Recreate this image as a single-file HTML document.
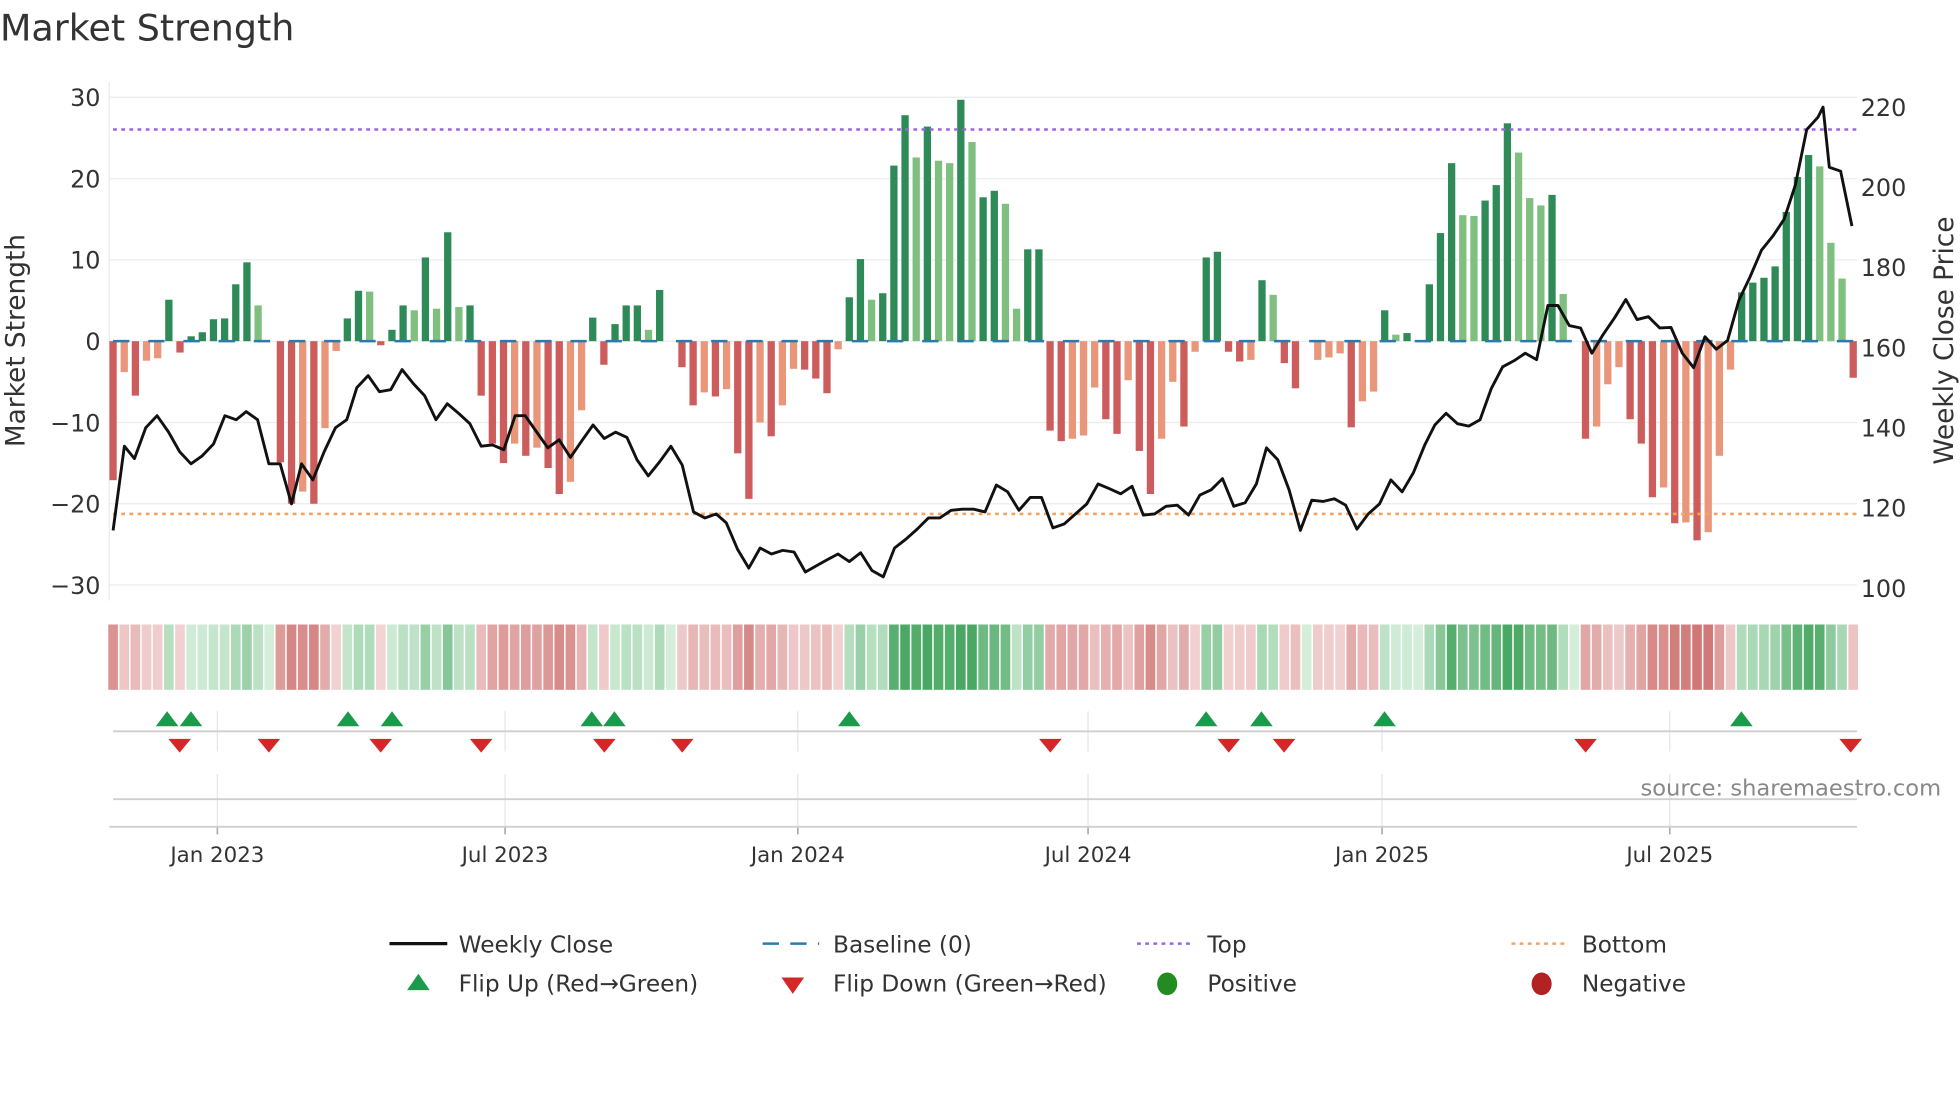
<!DOCTYPE html>
<html><head><meta charset="utf-8">
<style>
html,body{margin:0;padding:0;background:#fff;width:1960px;height:1102px;overflow:hidden}
svg{display:block}
text{font-family:"DejaVu Sans","Liberation Sans",sans-serif;fill:#333}
</style></head>
<body>
<svg id="c" width="1960" height="1102" viewBox="0 0 1560 877" xmlns="http://www.w3.org/2000/svg">
<text x="0" y="32" font-size="29">Market Strength</text>
<g id="grid"></g>
<g id="bars"></g>
<g id="lines"></g>
<g id="heat"></g>
<g id="marks"></g>
<text x="13" y="271" font-size="21" transform="rotate(-90 13 271)" text-anchor="middle" dominant-baseline="central">Market Strength</text>
<text x="1548" y="271" font-size="21" transform="rotate(-90 1548 271)" text-anchor="middle" dominant-baseline="central">Weekly Close Price</text>
<text x="1545" y="633" font-size="18" text-anchor="end" style="fill:#888">source: sharemaestro.com</text>
<g font-size="18.5">
<line x1="310" y1="751" x2="356" y2="751" stroke="#111" stroke-width="2.5"/>
<text x="365" y="758">Weekly Close</text>
<line x1="607" y1="751" x2="652" y2="751" stroke="#2a7ab0" stroke-width="2" stroke-dasharray="13 9"/>
<text x="663" y="758">Baseline (0)</text>
<line x1="905" y1="751" x2="948" y2="751" stroke="#9966dd" stroke-width="2" stroke-dasharray="3 3.5"/>
<text x="961" y="758">Top</text>
<line x1="1203" y1="751" x2="1247" y2="751" stroke="#f4a460" stroke-width="2" stroke-dasharray="3 3.5"/>
<text x="1259" y="758">Bottom</text>
<path d="M324 788 L342 788 L333 775 Z" fill="#1a9a4a"/>
<text x="365" y="789">Flip Up (Red→Green)</text>
<path d="M622 778 L640 778 L631 791 Z" fill="#d62728"/>
<text x="663" y="789">Flip Down (Green→Red)</text>
<ellipse cx="929" cy="783" rx="8" ry="9" fill="#228b22"/>
<text x="961" y="789">Positive</text>
<ellipse cx="1227" cy="783" rx="8" ry="9" fill="#b22222"/>
<text x="1259" y="789">Negative</text>
</g>
</svg>
<script>
var NS="http://www.w3.org/2000/svg";
function el(p,t,a){var e=document.createElementNS(NS,t);for(var k in a)e.setAttribute(k,a[k]);document.getElementById(p).appendChild(e);return e;}
function tx(p,x,y,s,a,sz){var e=el(p,'text',{x:x,y:y,'text-anchor':a,'font-size':sz||18});e.textContent=s;}
var V=[[-17.1,'d'],[-3.8,'l'],[-6.7,'d'],[-2.4,'l'],[-2.1,'l'],[5.1,'d'],[-1.4,'d'],[0.6,'d'],[1.1,'d'],[2.7,'d'],[2.8,'d'],[7,'d'],[9.7,'d'],[4.4,'l'],[0,'d'],
[-14.9,'d'],[-20,'d'],[-18.5,'l'],[-20,'d'],[-10.7,'l'],[-1.2,'l'],[2.8,'d'],[6.2,'d'],[6.1,'l'],[-0.5,'d'],[1.4,'d'],[4.4,'d'],[3.8,'l'],[10.3,'d'],[4,'l'],[13.4,'d'],[4.2,'l'],[4.4,'d'],
[-6.7,'d'],[-12.6,'d'],[-15,'d'],[-12.6,'l'],[-14.1,'d'],[-13.1,'l'],[-15.6,'d'],[-18.8,'d'],[-17.3,'l'],[-8.5,'l'],[2.9,'d'],[-2.9,'d'],[2.1,'d'],[4.4,'d'],[4.4,'d'],[1.4,'l'],[6.3,'d'],[0,'d'],
[-3.2,'d'],[-7.9,'d'],[-6.3,'l'],[-6.8,'d'],[-5.9,'l'],[-13.8,'d'],[-19.4,'d'],[-10,'l'],[-11.7,'d'],[-7.9,'l'],[-3.4,'l'],[-3.5,'d'],[-4.6,'d'],[-6.4,'d'],[-1,'l'],
[5.4,'d'],[10.1,'d'],[5.1,'l'],[5.9,'d'],[21.6,'d'],[27.8,'d'],[22.6,'l'],[26.4,'d'],[22.2,'l'],[21.9,'l'],[29.7,'d'],[24.5,'l'],[17.7,'d'],[18.5,'d'],[16.9,'l'],[4,'l'],[11.3,'d'],[11.3,'d'],
[-11,'d'],[-12.3,'d'],[-12,'l'],[-11.6,'l'],[-5.7,'l'],[-9.6,'d'],[-11.4,'d'],[-4.8,'l'],[-13.5,'d'],[-18.8,'d'],[-12,'l'],[-5,'l'],[-10.5,'d'],[-1.3,'l'],[10.3,'d'],[11,'d'],[-1.3,'d'],[-2.5,'d'],[-2.3,'l'],[7.5,'d'],[5.7,'l'],[-2.7,'d'],[-5.8,'d'],[0,'d'],[-2.3,'l'],[-2,'l'],[-1.5,'l'],[-10.6,'d'],[-7.4,'l'],[-6.2,'l'],
[3.8,'d'],[0.8,'l'],[1,'d'],[0,'d'],[7,'d'],[13.3,'d'],[21.9,'d'],[15.5,'l'],[15.4,'l'],[17.3,'d'],[19.2,'d'],[26.8,'d'],[23.2,'l'],[17.6,'l'],[16.7,'l'],[18,'d'],[5.8,'l'],[0,'d'],
[-12,'d'],[-10.5,'l'],[-5.3,'l'],[-3.2,'l'],[-9.6,'d'],[-12.6,'d'],[-19.2,'d'],[-18,'l'],[-22.4,'d'],[-22.3,'l'],[-24.5,'d'],[-23.5,'l'],[-14.1,'l'],[-3.5,'l'],
[6,'d'],[7.2,'d'],[7.8,'d'],[9.2,'d'],[15.9,'d'],[20.2,'d'],[22.9,'d'],[21.5,'l'],[12.1,'l'],[7.7,'l'],[-4.5,'d']];
var P=[[90,114.4],[99,135.4],[107,132.3],[116,140],[125,143],[134,139],[143,134],[152,131],[161,133],[170,136],[179,143],[188,142],[196,144],[205,142],[214,131],[223,131],[232,121],[240,131],[249,127],[258,134],[267,140],[276,142],[284,150],[293,153],[302,149],[311,149.5],[320,154.5],[329,151],[338,148],[347,142],[356,146],[365,143.6],[374,141],[383,135.4],[392,135.7],[401,134.5],[410,143],[418,143],[427,139],[436,135],[445,137],[454,132.6],[463,136.7],[472,140.7],[481,137.3],[490,138.9],[499,137.6],[507,132],[516,128],[525,131.5],[534,135.4],[543,130.7],[552,119],[561,117.5],[570,118.5],[578,116.3],[587,109.7],[596,105],[605,110],[614,108.5],[623,109.4],[632,109],[641,104],[650,105.6],[658,107],[667,108.5],[676,106.6],[685,108.8],[694,104.4],[703,102.8],[712,110],[721,112.2],[730,114.7],[739,117.5],[748,117.5],[757,119.4],[766,119.7],[775,119.7],[784,119],[793,125.7],[802,124],[811,119.4],[820,122.6],[829,122.6],[838,115],[847,116],[856,118.5],[865,121],[874,126],[883,124.8],[892,123.5],[901,125.4],[910,118.2],[919,118.5],[928,120.4],[937,120.7],[946,118.2],[955,123.2],[964,124.5],[973,127.3],[982,120.4],[991,121.3],[1000,126],[1008,135],[1017,132],[1026,124.5],[1035,114.4],[1044,121.9],[1053,121.6],[1062,122.3],[1071,120.7],[1080,114.7],[1089,118.5],[1098,121],[1107,127],[1116,124],[1125,128.8],[1134,135.7],[1142,140.7],[1151,143.6],[1160,141],[1169,140.4],[1178,142],[1187,149.8],[1196,155.2],[1205,156.7],[1214,158.6],[1223,157],[1232,170.5],[1240,170.5],[1249,165.5],[1258,164.9],[1267,158.6],[1276,163.3],[1285,167.4],[1294,172],[1303,167],[1312,167.7],[1321,164.9],[1330,165],[1339,158.6],[1348,155],[1357,162.7],[1366,159.6],[1375,161.8],[1384,171.8],[1393,177.7],[1402,184.3],[1411,187.8],[1420,192],[1429,200.6],[1438,214.4],[1447,217.5],[1451,220],[1456,205],[1465,204],[1474,190.3]];
var SP=(1475-90)/(V.length-1);
function ys(v){return 271.5-v*6.47;}
function yp(p){return 468-(p-100)*3.19;}
for(var v=-30;v<=30;v+=10){el('grid','line',{x1:87,x2:1478,y1:ys(v),y2:ys(v),stroke:'#ececf0','stroke-width':1});
 tx('grid',80,ys(v)+7,(v<0?'\u2212'+(-v):''+v),'end',19);}
for(var p=100;p<=220;p+=20){tx('grid',1481,yp(p)+7,''+p,'start',19);}
el('grid','line',{x1:87,x2:87,y1:65,y2:478,stroke:'#ececf0','stroke-width':1});
var mx=[[173,'Jan 2023'],[402,'Jul 2023'],[635,'Jan 2024'],[866,'Jul 2024'],[1100,'Jan 2025'],[1329,'Jul 2025']];
mx.forEach(function(m){el('grid','line',{x1:m[0],x2:m[0],y1:566,y2:598,stroke:'#e6e6ea','stroke-width':1});
 el('grid','line',{x1:m[0],x2:m[0],y1:616,y2:658,stroke:'#e6e6ea','stroke-width':1});
 el('grid','line',{x1:m[0],x2:m[0],y1:658,y2:664,stroke:'#aaa','stroke-width':1.3});
 tx('grid',m[0],686,m[1],'middle',17);});
el('grid','line',{x1:90,x2:1478,y1:582,y2:582,stroke:'#cfcfd3','stroke-width':1.5});
el('grid','line',{x1:90,x2:1478,y1:636,y2:636,stroke:'#cfcfd3','stroke-width':1.5});
el('grid','line',{x1:87,x2:1478,y1:658,y2:658,stroke:'#cfcfd3','stroke-width':1.5});
V.forEach(function(b,i){var x=90+SP*i,v=b[0];
 var t=Math.min(Math.abs(v)/24,1),r,g,bb;
 if(v>=0){r=212-(212-75)*t;g=238-(238-168)*t;bb=218-(218-100)*t;}else{r=243-(243-208)*t;g=214-(214-120)*t;bb=214-(214-118)*t;}
 el('heat','rect',{x:x-SP/2+0.6,width:SP-1.2,y:497,height:52,fill:'rgb('+(r|0)+','+(g|0)+','+(bb|0)+')'});
 if(v==0)return;
 var c=v>0?(b[1]=='d'?'#2e8b57':'#7fbf7f'):(b[1]=='d'?'#cd5c5c':'#e9967a');
 var y0=ys(0),y1=ys(v);el('bars','rect',{x:x-2.9,width:5.8,y:Math.min(y0,y1),height:Math.abs(y1-y0),fill:c});
});
el('lines','line',{x1:90,x2:1478,y1:ys(0),y2:ys(0),stroke:'#2a7ab0','stroke-width':2,'stroke-dasharray':'13 15'});
el('lines','line',{x1:90,x2:1478,y1:103,y2:103,stroke:'#9966dd','stroke-width':2,'stroke-dasharray':'3 3.5'});
el('lines','line',{x1:90,x2:1478,y1:409,y2:409,stroke:'#f4a460','stroke-width':2,'stroke-dasharray':'3 3.5'});
el('lines','polyline',{points:P.map(function(q){return q[0]+','+yp(q[1]).toFixed(1)}).join(' '),fill:'none',stroke:'#111','stroke-width':2.3,'stroke-linejoin':'round'});
[133,152,277,312,471,489,676,960,1004,1102,1386].forEach(function(x){el('marks','path',{d:'M'+(x-9)+' 578 L'+(x+9)+' 578 L'+x+' 566 Z',fill:'#1a9a4a'});});
[143,214,303,383,481,543,836,978,1022,1262,1473].forEach(function(x){el('marks','path',{d:'M'+(x-9)+' 588 L'+(x+9)+' 588 L'+x+' 599 Z',fill:'#d62728'});});
</script>
</body></html>
